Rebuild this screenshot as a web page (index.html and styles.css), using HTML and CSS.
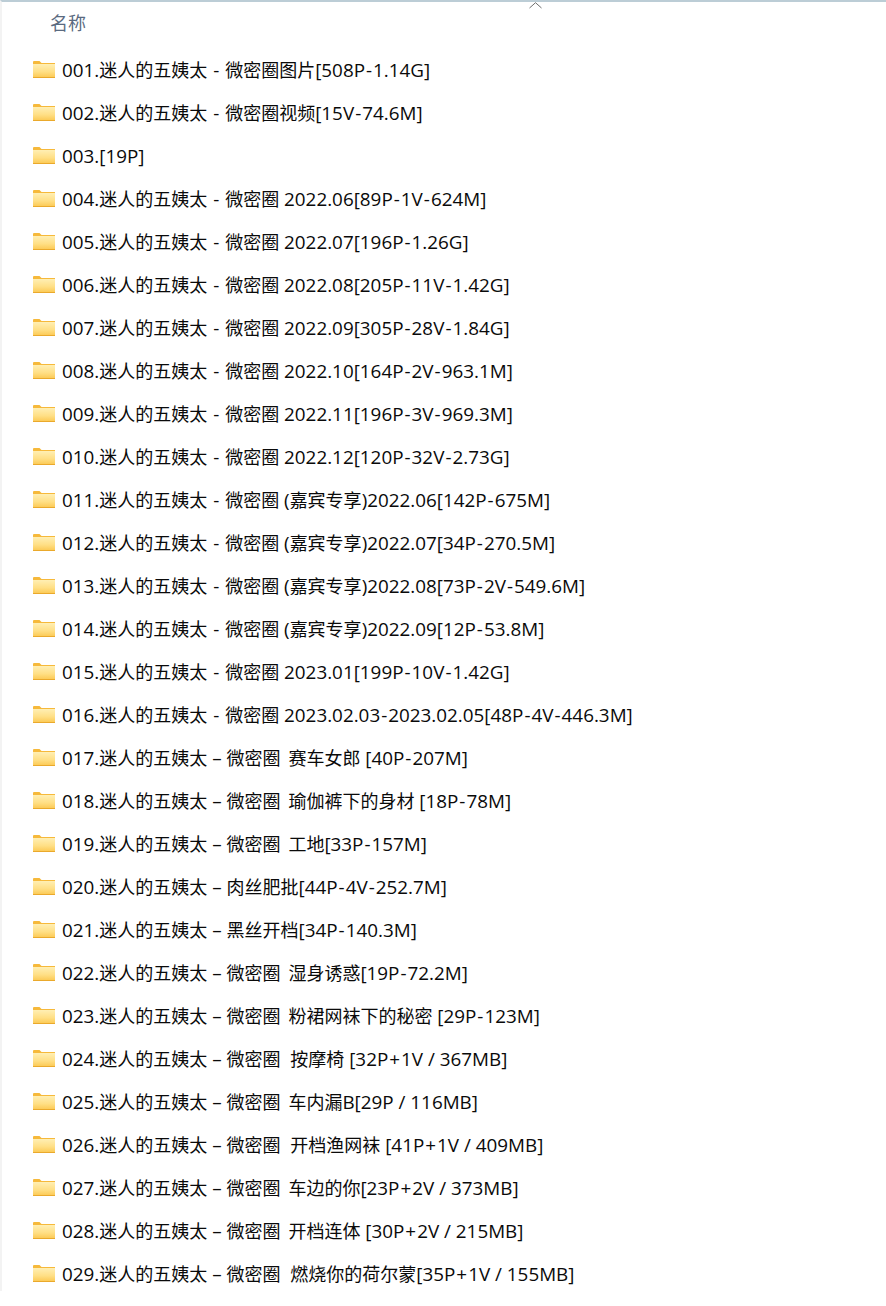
FILE: index.html
```html
<!DOCTYPE html>
<html lang="zh-CN">
<head>
<meta charset="utf-8">
<title>名称</title>
<link rel="stylesheet" href="styles.css">
</head>
<body>
<svg class="defs" width="0" height="0" aria-hidden="true">
<defs>
<linearGradient id="fg" x1="0" y1="0" x2="0" y2="1"><stop offset="0" stop-color="#ffefb4"/><stop offset="0.6" stop-color="#ffdf85"/><stop offset="1" stop-color="#fccb58"/></linearGradient>
<symbol id="folder" viewBox="0 0 22 17">
<path d="M0 1 Q0 0 1 0 H6.5 L8.5 2 H22 V17 H0Z" fill="#f6b93b"/>
<rect x="0" y="3" width="22" height="13" fill="url(#fg)"/>
<rect x="0" y="16" width="22" height="1" fill="#eaa92c"/>
</symbol>
</defs>
</svg>
<main class="panel">
<header class="head">
<span class="col">名称</span>
<svg class="sort" width="13" height="7" viewBox="0 0 13 7"><path d="M0.5 6 L6.5 0.7 L12.5 6" fill="none" stroke="#6d6d6d" stroke-width="1"/></svg>
</header>
<ul class="list">
<li class="row"><svg class="ico"><use href="#folder"/></svg><div>001.<span class="zh">迷人的五姨太</span> <span class="hy">-</span> <span class="zh">微密圈图片</span>[508P<span class="hy">-</span>1.14G]</div></li>
<li class="row"><svg class="ico"><use href="#folder"/></svg><div>002.<span class="zh">迷人的五姨太</span> <span class="hy">-</span> <span class="zh">微密圈视频</span>[15V<span class="hy">-</span>74.6M]</div></li>
<li class="row"><svg class="ico"><use href="#folder"/></svg><div>003.[19P]</div></li>
<li class="row"><svg class="ico"><use href="#folder"/></svg><div>004.<span class="zh">迷人的五姨太</span> <span class="hy">-</span> <span class="zh">微密圈</span> 2022.06[89P<span class="hy">-</span>1V<span class="hy">-</span>624M]</div></li>
<li class="row"><svg class="ico"><use href="#folder"/></svg><div>005.<span class="zh">迷人的五姨太</span> <span class="hy">-</span> <span class="zh">微密圈</span> 2022.07[196P<span class="hy">-</span>1.26G]</div></li>
<li class="row"><svg class="ico"><use href="#folder"/></svg><div>006.<span class="zh">迷人的五姨太</span> <span class="hy">-</span> <span class="zh">微密圈</span> 2022.08[205P<span class="hy">-</span>11V<span class="hy">-</span>1.42G]</div></li>
<li class="row"><svg class="ico"><use href="#folder"/></svg><div>007.<span class="zh">迷人的五姨太</span> <span class="hy">-</span> <span class="zh">微密圈</span> 2022.09[305P<span class="hy">-</span>28V<span class="hy">-</span>1.84G]</div></li>
<li class="row"><svg class="ico"><use href="#folder"/></svg><div>008.<span class="zh">迷人的五姨太</span> <span class="hy">-</span> <span class="zh">微密圈</span> 2022.10[164P<span class="hy">-</span>2V<span class="hy">-</span>963.1M]</div></li>
<li class="row"><svg class="ico"><use href="#folder"/></svg><div>009.<span class="zh">迷人的五姨太</span> <span class="hy">-</span> <span class="zh">微密圈</span> 2022.11[196P<span class="hy">-</span>3V<span class="hy">-</span>969.3M]</div></li>
<li class="row"><svg class="ico"><use href="#folder"/></svg><div>010.<span class="zh">迷人的五姨太</span> <span class="hy">-</span> <span class="zh">微密圈</span> 2022.12[120P<span class="hy">-</span>32V<span class="hy">-</span>2.73G]</div></li>
<li class="row"><svg class="ico"><use href="#folder"/></svg><div>011.<span class="zh">迷人的五姨太</span> <span class="hy">-</span> <span class="zh">微密圈</span> (<span class="zh">嘉宾专享</span>)2022.06[142P<span class="hy">-</span>675M]</div></li>
<li class="row"><svg class="ico"><use href="#folder"/></svg><div>012.<span class="zh">迷人的五姨太</span> <span class="hy">-</span> <span class="zh">微密圈</span> (<span class="zh">嘉宾专享</span>)2022.07[34P<span class="hy">-</span>270.5M]</div></li>
<li class="row"><svg class="ico"><use href="#folder"/></svg><div>013.<span class="zh">迷人的五姨太</span> <span class="hy">-</span> <span class="zh">微密圈</span> (<span class="zh">嘉宾专享</span>)2022.08[73P<span class="hy">-</span>2V<span class="hy">-</span>549.6M]</div></li>
<li class="row"><svg class="ico"><use href="#folder"/></svg><div>014.<span class="zh">迷人的五姨太</span> <span class="hy">-</span> <span class="zh">微密圈</span> (<span class="zh">嘉宾专享</span>)2022.09[12P<span class="hy">-</span>53.8M]</div></li>
<li class="row"><svg class="ico"><use href="#folder"/></svg><div>015.<span class="zh">迷人的五姨太</span> <span class="hy">-</span> <span class="zh">微密圈</span> 2023.01[199P<span class="hy">-</span>10V<span class="hy">-</span>1.42G]</div></li>
<li class="row"><svg class="ico"><use href="#folder"/></svg><div>016.<span class="zh">迷人的五姨太</span> <span class="hy">-</span> <span class="zh">微密圈</span> 2023.02.03<span class="hy">-</span>2023.02.05[48P<span class="hy">-</span>4V<span class="hy">-</span>446.3M]</div></li>
<li class="row"><svg class="ico"><use href="#folder"/></svg><div>017.<span class="zh">迷人的五姨太</span> – <span class="zh">微密圈</span> <span class="zh wide">赛车女郎</span> [40P<span class="hy">-</span>207M]</div></li>
<li class="row"><svg class="ico"><use href="#folder"/></svg><div>018.<span class="zh">迷人的五姨太</span> – <span class="zh">微密圈</span> <span class="zh wide">瑜伽裤下的身材</span> [18P<span class="hy">-</span>78M]</div></li>
<li class="row"><svg class="ico"><use href="#folder"/></svg><div>019.<span class="zh">迷人的五姨太</span> – <span class="zh">微密圈</span> <span class="zh wide">工地</span>[33P<span class="hy">-</span>157M]</div></li>
<li class="row"><svg class="ico"><use href="#folder"/></svg><div>020.<span class="zh">迷人的五姨太</span> – <span class="zh">肉丝肥批</span>[44P<span class="hy">-</span>4V<span class="hy">-</span>252.7M]</div></li>
<li class="row"><svg class="ico"><use href="#folder"/></svg><div>021.<span class="zh">迷人的五姨太</span> – <span class="zh">黑丝开档</span>[34P<span class="hy">-</span>140.3M]</div></li>
<li class="row"><svg class="ico"><use href="#folder"/></svg><div>022.<span class="zh">迷人的五姨太</span> – <span class="zh">微密圈</span> <span class="zh wide">湿身诱惑</span>[19P<span class="hy">-</span>72.2M]</div></li>
<li class="row"><svg class="ico"><use href="#folder"/></svg><div>023.<span class="zh">迷人的五姨太</span> – <span class="zh">微密圈</span> <span class="zh wide">粉裙网袜下的秘密</span> [29P<span class="hy">-</span>123M]</div></li>
<li class="row"><svg class="ico"><use href="#folder"/></svg><div>024.<span class="zh">迷人的五姨太</span> – <span class="zh">微密圈</span>  <span class="zh">按摩椅</span> [32P<span class="hy">+</span>1V / 367MB]</div></li>
<li class="row"><svg class="ico"><use href="#folder"/></svg><div>025.<span class="zh">迷人的五姨太</span> – <span class="zh">微密圈</span> <span class="zh wide">车内漏</span>B[29P / 116MB]</div></li>
<li class="row"><svg class="ico"><use href="#folder"/></svg><div>026.<span class="zh">迷人的五姨太</span> – <span class="zh">微密圈</span>  <span class="zh">开档渔网袜</span> [41P<span class="hy">+</span>1V / 409MB]</div></li>
<li class="row"><svg class="ico"><use href="#folder"/></svg><div>027.<span class="zh">迷人的五姨太</span> – <span class="zh">微密圈</span> <span class="zh wide">车边的你</span>[23P<span class="hy">+</span>2V / 373MB]</div></li>
<li class="row"><svg class="ico"><use href="#folder"/></svg><div>028.<span class="zh">迷人的五姨太</span> – <span class="zh">微密圈</span> <span class="zh wide">开档连体</span> [30P<span class="hy">+</span>2V / 215MB]</div></li>
<li class="row"><svg class="ico"><use href="#folder"/></svg><div>029.<span class="zh">迷人的五姨太</span> – <span class="zh">微密圈</span>  <span class="zh">燃烧你的荷尔蒙</span>[35P<span class="hy">+</span>1V / 155MB]</div></li>
</ul>
</main>
</body>
</html>
```
FILE: styles.css
```css
html, body {
  margin: 0;
  padding: 0;
  background: #fff;
}
body {
  height: 1306px;
  overflow: hidden;
  font-family: "Open Sans", "Noto Sans CJK SC", sans-serif;
}
.defs {
  position: absolute;
}
.panel {
  height: 1289px;
  border-top: 2px solid #bccdd6;
  border-left: 2px solid #f3f3f3;
}
.head {
  position: relative;
  height: 46px;
  padding: 0 0 7px 48px;
  box-sizing: border-box;
  display: flex;
  align-items: center;
}
.col {
  font-family: "Noto Sans CJK SC", sans-serif;
  font-size: 18px;
  color: #5a6a80;
}
.sort {
  position: absolute;
  left: 527px;
  top: 0;
}
.list {
  list-style: none;
  margin: 0;
  padding: 0 0 0 31px;
}
.row {
  height: 43px;
  display: flex;
  align-items: center;
  gap: 7px;
  font-size: 18.85px;
  line-height: 24px;
  color: #0a0a0a;
  white-space: pre;
}
.zh {
  font-family: "Noto Sans CJK SC", sans-serif;
  font-size: 18px;
}
.wide {
  margin-left: 3px;
}
.hy {
  margin: 0 1px;
}
.ico {
  width: 22px;
  height: 17px;
  flex: none;
}
```
